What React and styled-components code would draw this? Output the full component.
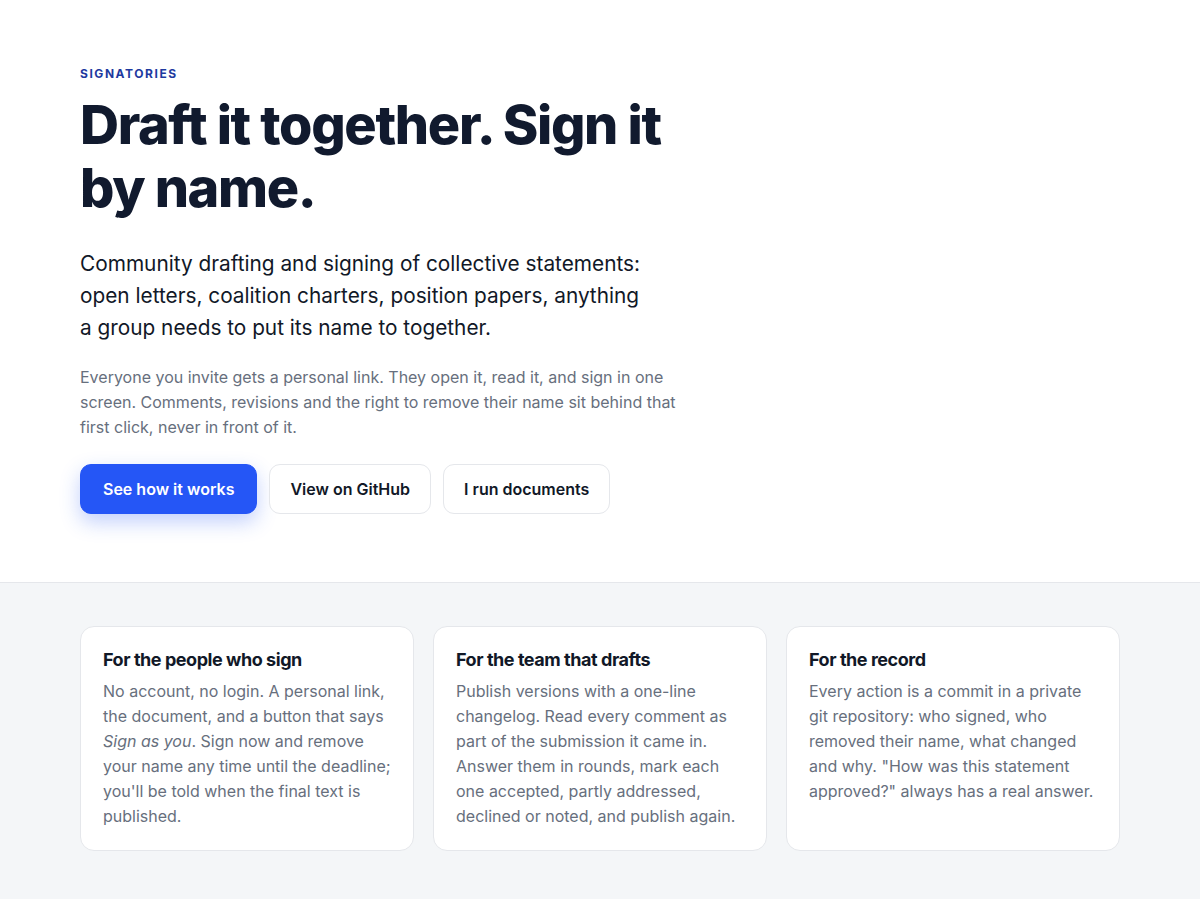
import styled, { createGlobalStyle } from 'styled-components';

const GlobalStyle = createGlobalStyle`
  body {
    margin: 0;
    background: #ffffff;
    font-family: Inter, "Noto Sans", sans-serif;
    color: #0f172a;
    -webkit-font-smoothing: antialiased;
  }
  * { box-sizing: border-box; }
`;

const Hero = styled.section`
  padding: 67px 80px 68px;
  background: #ffffff;
  border-bottom: 1px solid #e5e7eb;
`;

const Eyebrow = styled.div`
  font-size: 12px;
  font-weight: 700;
  letter-spacing: 0.13em;
  text-transform: uppercase;
  color: #1e3a9f;
  line-height: 14px;
`;

const Heading = styled.h1`
  margin: 12px 0 0;
  max-width: 620px;
  font-size: 54px;
  font-weight: 800;
  line-height: 63px;
  letter-spacing: -0.025em;
  color: #111a2e;
`;

const Lead = styled.p`
  margin: 29px 0 0;
  max-width: 575px;
  font-size: 20.8px;
  line-height: 32px;
  color: #111827;
`;

const Note = styled.p`
  margin: 21px 0 0;
  max-width: 600px;
  font-size: 16px;
  line-height: 25px;
  color: #676f7d;
`;

const Actions = styled.div`
  display: flex;
  gap: 12px;
  margin-top: 24px;
`;

const Button = styled.a`
  display: inline-flex;
  align-items: center;
  height: 50px;
  padding: 0 ${p => (p.$primary ? '22px' : '20px')};
  border-radius: 11px;
  font-size: 16px;
  font-weight: 600;
  text-decoration: none;
  cursor: pointer;
  color: ${p => (p.$primary ? '#ffffff' : '#111827')};
  background: ${p => (p.$primary ? '#2556f6' : '#ffffff')};
  border: 1px solid ${p => (p.$primary ? '#2556f6' : '#e5e7eb')};
  box-shadow: ${p => (p.$primary ? '0 8px 20px rgba(37, 86, 246, 0.28)' : 'none')};
`;

const Features = styled.section`
  background: #f4f6f8;
  padding: 43px 80px 48px;
`;

const Grid = styled.div`
  display: grid;
  grid-template-columns: repeat(3, 1fr);
  gap: 19px;
`;

const Card = styled.div`
  background: #ffffff;
  border: 1px solid #e5e7eb;
  border-radius: 14px;
  padding: 22px 22px 21px;
`;

const CardTitle = styled.h3`
  margin: 0;
  font-size: 18px;
  font-weight: 700;
  line-height: 22px;
  letter-spacing: -0.025em;
  color: #111827;
`;

const CardText = styled.p`
  margin: 8px 0 0;
  font-size: 16px;
  line-height: 25px;
  color: #676f7d;
`;

const cards = [
  {
    title: 'For the people who sign',
    body: (
      <>
        No account, no login. A personal link, the document, and a button that says{' '}
        <em>Sign as you</em>. Sign now and remove your name any time until the deadline;
        you'll be told when the final text is published.
      </>
    ),
  },
  {
    title: 'For the team that drafts',
    body: 'Publish versions with a one-line changelog. Read every comment as part of the submission it came in. Answer them in rounds, mark each one accepted, partly addressed, declined or noted, and publish again.',
  },
  {
    title: 'For the record',
    body: 'Every action is a commit in a private git repository: who signed, who removed their name, what changed and why. "How was this statement approved?" always has a real answer.',
  },
];

export default function App() {
  return (
    <>
      <GlobalStyle />
      <Hero>
        <Eyebrow>Signatories</Eyebrow>
        <Heading>Draft it together. Sign it by name.</Heading>
        <Lead>
          Community drafting and signing of collective statements: open letters, coalition
          charters, position papers, anything a group needs to put its name to together.
        </Lead>
        <Note>
          Everyone you invite gets a personal link. They open it, read it, and sign in one
          screen. Comments, revisions and the right to remove their name sit behind that first
          click, never in front of it.
        </Note>
        <Actions>
          <Button $primary>See how it works</Button>
          <Button>View on GitHub</Button>
          <Button>I run documents</Button>
        </Actions>
      </Hero>
      <Features>
        <Grid>
          {cards.map(c => (
            <Card key={c.title}>
              <CardTitle>{c.title}</CardTitle>
              <CardText>{c.body}</CardText>
            </Card>
          ))}
        </Grid>
      </Features>
    </>
  );
}
